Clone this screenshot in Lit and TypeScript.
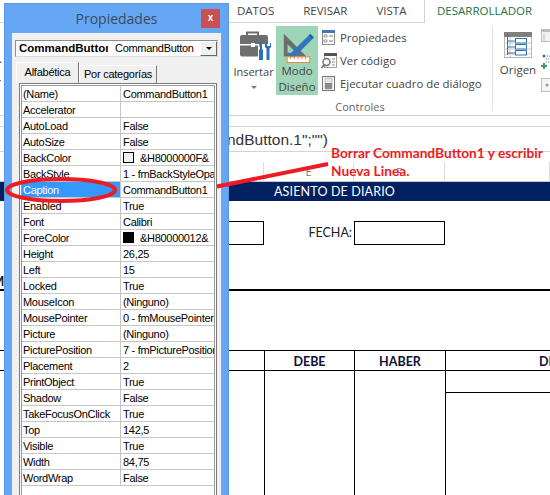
import { LitElement, html, css, svg } from "lit";
import { customElement } from "lit/decorators.js";

type Row = { n: string; v: string; swatch?: string; sel?: boolean };
const rows: Row[] = [
  { n: "(Name)", v: "CommandButton1" },
  { n: "Accelerator", v: "" },
  { n: "AutoLoad", v: "False" },
  { n: "AutoSize", v: "False" },
  { n: "BackColor", v: "&H8000000F&", swatch: "#f0f0f0" },
  { n: "BackStyle", v: "1 - fmBackStyleOpaque" },
  { n: "Caption", v: "CommandButton1", sel: true },
  { n: "Enabled", v: "True" },
  { n: "Font", v: "Calibri" },
  { n: "ForeColor", v: "&H80000012&", swatch: "#000" },
  { n: "Height", v: "26,25" },
  { n: "Left", v: "15" },
  { n: "Locked", v: "True" },
  { n: "MouseIcon", v: "(Ninguno)" },
  { n: "MousePointer", v: "0 - fmMousePointerDefault" },
  { n: "Picture", v: "(Ninguno)" },
  { n: "PicturePosition", v: "7 - fmPicturePositionAboveCenter" },
  { n: "Placement", v: "2" },
  { n: "PrintObject", v: "True" },
  { n: "Shadow", v: "False" },
  { n: "TakeFocusOnClick", v: "True" },
  { n: "Top", v: "142,5" },
  { n: "Visible", v: "True" },
  { n: "Width", v: "84,75" },
  { n: "WordWrap", v: "False" },
];

const briefcase = html`<svg width="32" height="30" viewBox="0 0 32 30">
  <path d="M7 4V1.500h11V4" fill="none" stroke="#6e6e6e" stroke-width="2"/>
  <path d="M2 4h24a2 2 0 0 1 2 2v7H0V6a2 2 0 0 1 2-2z" fill="#6e6e6e"/>
  <path d="M0 14.500h18v11H2a2 2 0 0 1-2-2z" fill="#6e6e6e"/>
  <rect x="11" y="12" width="4" height="4" fill="#fff"/>
  <path d="M19 12l3 0 0 6 1 1v10h-4V19l1-1z" fill="#2f6fb5"/>
  <path d="M25 12v4l1.500 1.500V29h3V17.500L31 16v-4l-1 0v3h-3v-3z" fill="#2f6fb5"/>
</svg>`;

const design = html`<svg width="42" height="34" viewBox="0 0 42 34">
  <path fill-rule="evenodd" d="M7 3l24 24H7zM11 14v9h9z" fill="#6a6f6c"/>
  <path d="M14 24L33 5l4 4-19 19-6 1z" fill="#2f75c0"/>
  <path d="M33 5l2-2 4 4-2 2z" fill="#1f5f9f"/>
  <rect x="10.500" y="27.500" width="24" height="6" fill="#fff" stroke="#e8853a"/>
  <path d="M14 28v2M18 28v2M22 28v2M26 28v2M30 28v2" stroke="#e8853a"/>
</svg>`;

const propIcon = html`<svg width="15" height="17" viewBox="0 0 15 17">
  <rect x="1.500" y="1.500" width="12" height="14" fill="#fff" stroke="#8a8a8a"/>
  <rect x="1" y="1" width="13" height="3" fill="#3f78b5"/>
  <rect x="3" y="6" width="3" height="2" fill="#fff" stroke="#777" stroke-width=".7"/>
  <rect x="3" y="11" width="3" height="2" fill="#fff" stroke="#777" stroke-width=".7"/>
  <path d="M8 7h4M8 12h4" stroke="#777"/>
</svg>`;

const codeIcon = html`<svg width="17" height="17" viewBox="0 0 17 17">
  <rect x="3.500" y="1.500" width="12" height="14" fill="#fff" stroke="#a0a0a0"/>
  <rect x="3" y="1" width="13" height="3" fill="#555"/>
  <path d="M11 7h3M11 10h3M11 13h3" stroke="#888"/>
  <circle cx="5.500" cy="10" r="3.500" fill="#fff" stroke="#5f6f7f" stroke-width="1.400"/>
  <path d="M3 13l-2.500 3" stroke="#5f6f7f" stroke-width="1.800"/>
</svg>`;

const runIcon = html`<svg width="15" height="17" viewBox="0 0 15 17">
  <rect x="1.500" y="1.500" width="12" height="14" fill="#fff" stroke="#777"/>
  <rect x="4" y="3" width="7" height="11" fill="#e4e4e4" stroke="#999" stroke-width=".6"/>
  <rect x="4" y="8" width="7" height="6" fill="#8c8c8c"/>
</svg>`;

const originIcon = html`<svg width="29" height="26" viewBox="0 0 29 26">
  <rect x=".5" y=".5" width="27" height="25" fill="#fff" stroke="#b5b5b5"/>
  <rect x="0" y="0" width="28" height="5" fill="#7f7f7f"/>
  <path d="M0 11h28M0 17h28M0 22h28M6 5v20" stroke="#c8c8c8"/>
  <path d="M3.500 2v21M3.500 9h8M3.500 15h8M3.500 21h8" stroke="#2f75b5" fill="none"/>
  <rect x="11.500" y="6.500" width="11" height="4.500" fill="#fff" stroke="#2f75b5"/>
  <rect x="11.500" y="12.500" width="11" height="4.500" fill="#fff" stroke="#2f75b5"/>
  <rect x="11.500" y="18.500" width="11" height="4.500" fill="#fff" stroke="#2f75b5"/>
</svg>`;

const sideA = html`<svg width="9" height="13" viewBox="0 0 9 13">
  <rect x=".5" y=".5" width="12" height="12" fill="#f2f2f2" stroke="#bdbdbd"/>
  <rect x="0" y="0" width="9" height="3" fill="#bdbdbd"/>
  <path d="M3 5v7" stroke="#bdbdbd"/>
</svg>`;
const sideB = html`<svg width="9" height="16" viewBox="0 0 9 16">
  <circle cx="3" cy="2" r="1.500" fill="#2f75b5"/>
  <path d="M6 2h3M5 5h4M5 8h4" stroke="#777" stroke-dasharray="1 1"/>
  <path d="M3 9v6M0 12h6" stroke="#3a9a6a" stroke-width="2"/>
</svg>`;
const sideC = html`<svg width="9" height="14" viewBox="0 0 9 14">
  <rect x=".5" y=".5" width="12" height="13" fill="#f4f4f4" stroke="#bdbdbd"/>
  <circle cx="6" cy="7" r="1.500" fill="#999"/>
</svg>`;

const marks = svg`
  <ellipse cx="61" cy="190" rx="54" ry="11" fill="none" stroke="#ed1c24" stroke-width="4"/>
  <line x1="217" y1="186.500" x2="328" y2="164" stroke="#ed1c24" stroke-width="4"/>
`;

@customElement("app-root")
export class AppRoot extends LitElement {
  static styles = css`
    :host { display: block; position: relative; width: 550px; height: 495px; overflow: hidden; background: #fff; font-family: "Open Sans", sans-serif; color: #444; }
    .tabs { display: flex; height: 23px; box-sizing: border-box; border-bottom: 1px solid #d4d4d4; font-size: 11.5px; line-height: 22px; color: #444; }
    .tabs-spacer { width: 424px; flex: none; display: flex; }
    .tabs-spacer span { white-space: nowrap; }
    .t1 { margin-left: 237px; }
    .t2 { margin-left: 29px; }
    .t3 { margin-left: 29px; }
    .active-tab { flex: 1; height: 23px; box-sizing: border-box; border-left: 1px solid #d4d4d4; background: #fff; color: #217346; padding-left: 12px; }

    .ribbon { display: flex; height: 93px; box-sizing: border-box; border-bottom: 1px solid #d4d4d4; padding-top: 3px; }
    .ghost { width: 238px; flex: none; font-size: 12px; line-height: 16px; padding-top: 25px; margin-left: -4px; box-sizing: border-box; color: #444; }
    .ghost div { height: 24px; }
    .group { width: 259px; flex: none; box-sizing: border-box; border-right: 1px solid #e2e2e2; height: 85px; display: flex; flex-direction: column; }
    .controls { display: flex; height: 69px; }
    .big { display: flex; flex-direction: column; align-items: center; font-size: 11.5px; line-height: 16px; color: #444; text-align: center; }
    .insert { width: 39px; padding-top: 5px; box-sizing: border-box; font-size: 11px; }
    .insert svg { height: 30px; margin-bottom: 3px; margin-left: 4px; }
    .modo { width: 42px; margin-left: 3px; background: #9fd5b7; padding-top: 5px; box-sizing: border-box; }
    .arrow { width: 0; height: 0; border: 3px solid transparent; border-top: 3px solid #777; margin-top: 6px; }
    .list { margin-left: 3px; display: flex; flex-direction: column; }
    .item { height: 23px; display: flex; align-items: center; font-size: 11.4px; white-space: nowrap; }
    .item .ico { width: 19px; flex: none; display: flex; }
    .glabel { text-align: center; font-size: 11px; color: #666; line-height: 16px; margin-top: 4px; margin-left: -6px; }
    .origen { width: 44px; margin-left: 3px; padding-top: 6px; box-sizing: border-box; }
    .origen svg { margin-bottom: 4px; }
    .side { display: flex; flex-direction: column; margin-left: 1px; padding-top: 3px; }
    .side svg { display: block; }
    .side .b { margin-top: 12px; }
    .side .c { margin-top: 8px; }

    .formula { margin-top: 10px; height: 26px; box-sizing: border-box; border-top: 1px solid #d4d4d4; border-bottom: 1px solid #d4d4d4; font-size: 15.500px; line-height: 25px; padding-left: 227px; white-space: nowrap; overflow: hidden; color: #333; font-family: "Liberation Sans", sans-serif; }
    .heads { display: grid; grid-template-columns: 264px 90px 91px 105px; height: 30px; box-sizing: border-box; padding-top: 10px; border-bottom: 1px solid #c8c8c8; font-size: 11px; color: #777; }
    .heads div { border-right: 1px solid #dcdcdc; text-align: center; line-height: 19px; }
    .band { height: 19px; background: #002060; color: #fff; font: 12.5px/20px Lato, sans-serif; padding-left: 274px; letter-spacing: .15px; }

    .form { display: grid; grid-template-columns: 264px 90px 91px; height: 21px; margin-top: 20px; font: 12.5px/24px Lato, sans-serif; color: #222; }
    .form .lead { margin-left: 100px; }
    .box { border: 1px solid #000; box-sizing: border-box; }
    .fecha { text-align: right; padding-right: 2px; }
    .gap { height: 47px; font: bold 13px/14px Lato, sans-serif; color: #222; margin-left: -8px; padding-top: 32px; box-sizing: border-box; }
    .rule { height: 2px; background: #000; }
    .table { margin-top: 59px; display: grid; grid-template-columns: 264px 90px 91px 105px; grid-template-rows: 20px 125px; border-top: 1px solid #000; }
    .th { border-bottom: 1px solid #000; border-left: 1px solid #000; box-sizing: border-box; text-align: center; font: bold 12.5px/21px Lato, sans-serif; color: #10103a; white-space: nowrap; overflow: hidden; }
    .th.first { border-left: 0; }
    .th.cut { text-align: left; padding-left: 93px; }
    .td { border-left: 1px solid #000; box-sizing: border-box; }
    .td.first { border-left: 0; }
    .sub { height: 21px; border-bottom: 1px solid #000; }

    .window { position: absolute; left: 4px; top: 3px; width: 225px; height: 500px; box-sizing: border-box; background: #66a7f5; border: 1px solid #5a98e2; border-bottom: 0; color: #000; }
    .title { height: 29px; position: relative; text-align: center; font: 14px/30px "Open Sans", sans-serif; color: #3c4a58; }
    .close { position: absolute; right: 8px; top: 5px; width: 19px; height: 19px; background: #c75050; color: #fff; font: bold 10px/18px "Liberation Sans", sans-serif; }
    .panel { margin: 0 7px 0 7px; height: 480px; background: #f0f0f0; padding: 7px 2px 0 3px; box-sizing: border-box; }
    .combo { height: 17px; width: 203px; box-sizing: border-box; background: #fff; border: 1px solid #8c8c8c; border-right-color: #dcdcdc; border-bottom-color: #dcdcdc; display: flex; align-items: center; font: 11px/15px "Liberation Sans", sans-serif; position: relative; }
    .combo b { width: 89px; margin-left: 3px; overflow: hidden; white-space: nowrap; font-size: 11.5px; flex: none; }
    .combo span { margin-left: 7px; letter-spacing: -.3px; }
    .drop { position: absolute; right: 0; top: 0; width: 17px; height: 15px; box-sizing: border-box; background: #f0f0f0; border: 1px solid #fff; border-right-color: #666; border-bottom-color: #666; display: flex; align-items: center; justify-content: center; }
    .drop i { width: 0; height: 0; border: 3px solid transparent; border-top: 3px solid #000; margin-top: 3px; }
    .ptabs { display: flex; height: 21px; margin-top: 5px; margin-left: 1px; font: 11px "Liberation Sans", sans-serif; letter-spacing: -.25px; align-items: flex-end; }
    .ptab { box-sizing: border-box; border: 1px solid #fff; border-right: 1px solid #777; border-bottom: 0; white-space: nowrap; text-align: center; }
    .ptab.on { width: 63px; height: 21px; line-height: 18px; }
    .ptab.off { width: 78px; height: 18px; line-height: 17px; }
    .frame { width: 198px; margin-left: 4px; height: 420px; box-sizing: border-box; padding: 2px; background: #fff; border: 1px solid #7c7c7c; box-shadow: inset 0 0 0 1px #fff, inset 0 0 0 2px #9a9a9a; }
    .row { display: flex; height: 16px; box-sizing: border-box; border-bottom: 1px solid #c6c6c6; font: 11px/17px "Liberation Sans", sans-serif; letter-spacing: -.3px; white-space: nowrap; }
    .row .n { width: 99px; flex: none; box-sizing: border-box; border-right: 1px solid #c6c6c6; padding-left: 1px; height: 15px; overflow: hidden; }
    .row.sel .n { background: #3399ff; color: #fff; }
    .row .v { flex: 1; height: 15px; overflow: hidden; padding-left: 2px; display: flex; align-items: flex-start; min-width: 0; }
    .sw { width: 11px; height: 11px; box-sizing: border-box; border: 1px solid #000; margin: 2px 6px 0 0; flex: none; }

    .marks { position: absolute; left: 0; top: 0; pointer-events: none; }
    .note { position: absolute; left: 331px; top: 144px; color: #ed1c24; font: bold 13.7px/18px Lato, sans-serif; white-space: nowrap; }
  `;

  render() {
    return html`
      <div class="tabs">
        <div class="tabs-spacer">
          <span class="t1">DATOS</span><span class="t2">REVISAR</span><span class="t3">VISTA</span>
        </div>
        <div class="active-tab">DESARROLLADOR</div>
      </div>
      <div class="ribbon">
        <div class="ghost"><div>l.</div><div>r</div></div>
        <div class="group">
          <div class="controls">
            <div class="big insert">${briefcase}<div>Insertar</div><div class="arrow"></div></div>
            <div class="big modo">${design}<div>Modo<br />Diseño</div></div>
            <div class="list">
              <div class="item"><span class="ico">${propIcon}</span>Propiedades</div>
              <div class="item"><span class="ico">${codeIcon}</span>Ver código</div>
              <div class="item"><span class="ico">${runIcon}</span>Ejecutar cuadro de diálogo</div>
            </div>
          </div>
          <div class="glabel">Controles</div>
        </div>
        <div class="big origen">${originIcon}<div>Origen</div></div>
        <div class="side">${sideA}<span class="b">${sideB}</span><span class="c">${sideC}</span></div>
      </div>
      <div class="formula">ndButton.1";"")</div>
      <div class="heads"><div></div><div>E</div><div>F</div><div></div></div>
      <div class="band">ASIENTO DE DIARIO</div>
      <div class="form"><div class="box lead"></div><div class="fecha">FECHA:</div><div class="box"></div></div>
      <div class="gap">M</div>
      <div class="rule"></div>
      <div class="table">
        <div class="th first"></div><div class="th">DEBE</div><div class="th">HABER</div><div class="th cut">DE</div>
        <div class="td first"></div><div class="td"></div><div class="td"></div><div class="td"><div class="sub"></div></div>
      </div>

      <div class="window">
        <div class="title">Propiedades<div class="close">x</div></div>
        <div class="panel">
          <div class="combo"><b>CommandButton1</b><span>CommandButton</span><div class="drop"><i></i></div></div>
          <div class="ptabs"><div class="ptab on">Alfabética</div><div class="ptab off">Por categorías</div></div>
          <div class="frame">
            ${rows.map(
              (r) => html`<div class="row ${r.sel ? "sel" : ""}">
                <div class="n">${r.n}</div>
                <div class="v">${r.swatch ? html`<span class="sw" style="background:${r.swatch}"></span>` : ""}${r.v}</div>
              </div>`
            )}
          </div>
        </div>
      </div>

      <svg class="marks" width="550" height="495">${marks}</svg>
      <div class="note">Borrar CommandButton1 y escribir<br />Nueva Linea.</div>
    `;
  }
}
